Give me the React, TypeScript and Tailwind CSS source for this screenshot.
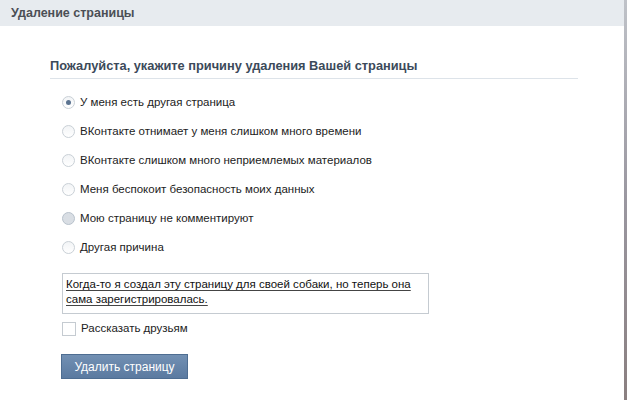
import { useState } from "react";

const reasons = [
    "У меня есть другая страница",
    "ВКонтакте отнимает у меня слишком много времени",
    "ВКонтакте слишком много неприемлемых материалов",
    "Меня беспокоит безопасность моих данных",
    "Мою страницу не комментируют",
    "Другая причина",
];

const Radio = ({ checked, hover }: { checked: boolean; hover?: boolean }) => (
    <span
        className={
            "flex h-[13px] w-[13px] shrink-0 items-center justify-center rounded-full border " +
            (hover ? "border-[#b8c2cc] bg-[#d9dee4]" : "border-[#c9d0d6] bg-gradient-to-b from-[#f2f4f6] to-white")
        }>
        {checked && <span className="h-[5px] w-[5px] rounded-full bg-[#5b7390]" />}
    </span>
);

const App = () => {
    const [selected, setSelected] = useState(0);

    return (
        <div className="flex h-[400px] w-[627px] bg-white font-['Liberation_Sans',Arial,sans-serif]">
            <div className="flex flex-1 flex-col">
                <div className="flex h-[26px] items-center bg-[#e7ebef] pl-[11px] text-[12.5px] font-bold text-[#4b4f55]">
                    Удаление страницы
                </div>
                <div className="flex flex-col pl-[50px] pt-[30px]">
                    <div className="w-[528px] border-b border-[#dde3e9] pb-[3px] text-[12.8px] font-bold text-[#3c4a5a]">
                        Пожалуйста, укажите причину удаления Вашей страницы
                    </div>
                    <div className="flex flex-col gap-[16px] pl-[12px] pt-[17px]">
                        {reasons.map((r, i) => (
                            <label
                                key={r}
                                className="flex h-[13px] cursor-pointer items-center gap-[5px] text-[11.5px] text-[#222]"
                                onClick={() => setSelected(i)}>
                                <Radio checked={selected === i} hover={i === 4} />
                                <span>{r}</span>
                            </label>
                        ))}
                    </div>
                    <div className="ml-[12px] mt-[19px] h-[41px] w-[367px] border border-[#c5cbd1] px-[3px] pt-[3px] text-[11.5px] leading-[15px] text-[#111]">
                        <span className="underline decoration-[#444] underline-offset-2">
                            Когда-то я создал эту страницу для своей собаки, но теперь она сама зарегистрировалась.
                        </span>
                    </div>
                    <label className="ml-[12px] mt-[6px] flex items-center gap-[5px] text-[11.5px] text-[#222]">
                        <span className="h-[14px] w-[14px] border border-[#c5cbd1] bg-white" />
                        <span>Рассказать друзьям</span>
                    </label>
                    <button className="ml-[11px] mt-[17px] h-[25px] w-[127px] border border-[#4e6d91] bg-gradient-to-b from-[#7290b3] to-[#5b7aa0] text-[12px] text-white">
                        Удалить страницу
                    </button>
                </div>
            </div>
            <div className="w-[3px] bg-gradient-to-b from-[#bfc2c8] via-[#9a97a0] to-[#8a7f80]" />
        </div>
    );
};

export default App;
